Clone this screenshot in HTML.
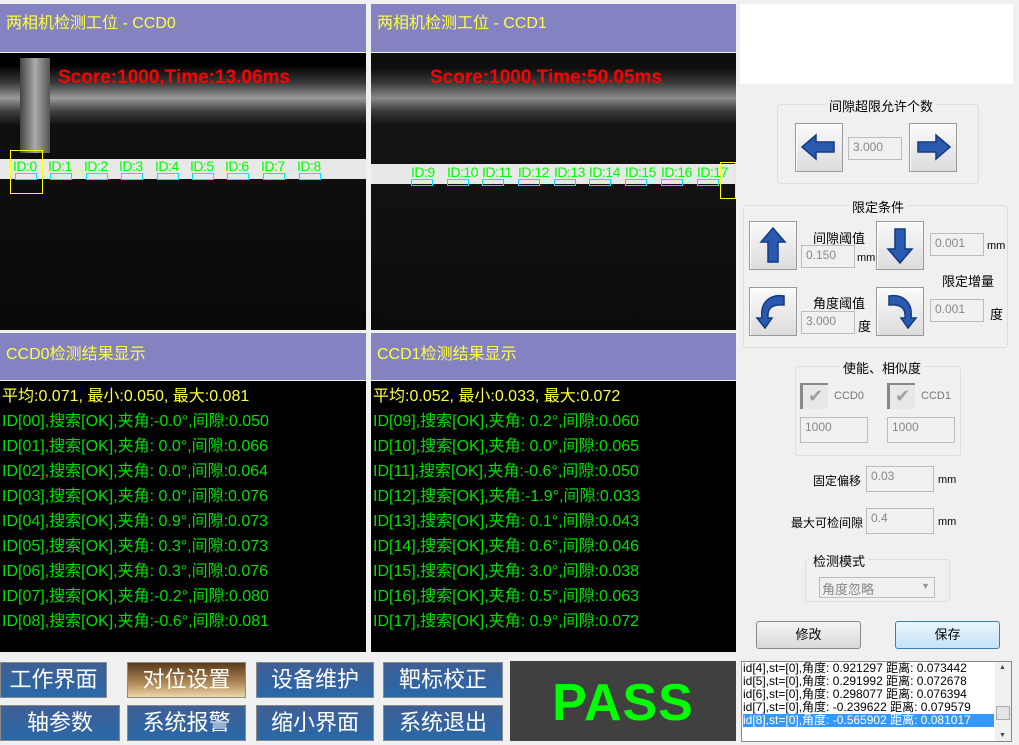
<!DOCTYPE html>
<html><head><meta charset="utf-8"><style>
*{margin:0;padding:0;box-sizing:border-box}
body{width:1019px;height:744px;background:#f0f0f0;position:relative;overflow:hidden;font-family:"Liberation Sans","Noto Sans CJK SC",sans-serif}
.a{position:absolute}
.hd{background:#8482c1;color:#ffff40;font-size:16px;padding:5px 6px}
.img{background:#060606;overflow:hidden}
.res{background:#000;font-size:16px;line-height:25px;padding:3px 2px;color:#00e000;white-space:nowrap}
.btn{background:linear-gradient(#3f5f94,#2a68a8);color:#fff;font-size:22px;text-align:center;line-height:34px;border:1px solid #8a8a8a}
.id{position:absolute;color:#00ff00;font-size:14px;top:-2px;letter-spacing:-0.5px}
.bx{position:absolute;border:1px solid #00e5ff;width:22px;height:7px;top:13px}
.grp{border:1px solid #d5dfe5;border-radius:3px}
.lg{position:absolute;background:#f0f0f0;font-size:13px;color:#000;padding:0 3px}
.ib{background:#f0f0f0;border:1px solid #bcbcbc;color:#888;font-size:12px;padding:2px 4px}
.ab{background:linear-gradient(#fafafa,#dcdcdc);border:1px solid #9a9a9a;box-shadow:inset 1px 1px 0 #fff}
.t{font-size:13px;color:#000}
.mm{font-size:11px;color:#000}
</style></head><body>
<div class="a hd" style="left:0;top:4px;width:366px;height:48px">两相机检测工位 - CCD0</div>
<div class="a img" style="left:0;top:53px;width:366px;height:277px;background:linear-gradient(#000 0,#000 12px,#3a3a3a 30px,#9a9a9a 45px,#404040 58px,#101010 72px,#0a0a0a 100%)">
 <div class="a" style="left:20px;top:5px;width:30px;height:95px;background:linear-gradient(90deg,#444,#aaa,#555)"></div>
 <div class="a" style="left:0;top:106px;width:366px;height:20px;background:#e8e8e8"></div>
 <div class="a" style="left:10px;top:97px;width:33px;height:44px;border:1px solid #ffff00"></div>
 <div class="a" style="left:13px;top:107px;width:340px;height:20px">
  <span class="id" style="left:0">ID:0</span><span class="id" style="left:35px">ID:1</span><span class="id" style="left:71px">ID:2</span><span class="id" style="left:106px">ID:3</span><span class="id" style="left:142px">ID:4</span><span class="id" style="left:177px">ID:5</span><span class="id" style="left:212px">ID:6</span><span class="id" style="left:248px">ID:7</span><span class="id" style="left:284px">ID:8</span>
  <span class="bx" style="left:2px"></span><span class="bx" style="left:37px"></span><span class="bx" style="left:73px"></span><span class="bx" style="left:108px"></span><span class="bx" style="left:144px"></span><span class="bx" style="left:179px"></span><span class="bx" style="left:214px"></span><span class="bx" style="left:250px"></span><span class="bx" style="left:286px"></span>
 </div>
 <div class="a" style="left:58px;top:14px;color:#f00;font-size:19px;font-weight:bold">Score:1000,Time:13.06ms</div>
</div>
<div class="a hd" style="left:0;top:333px;width:366px;height:47px;padding-top:7px">CCD0检测结果显示</div>
<div class="a res" style="left:0;top:381px;width:366px;height:271px">
<div style="color:#ffff40">平均:0.071, 最小:0.050, 最大:0.081</div>
<div>ID[00],搜索[OK],夹角:-0.0°,间隙:0.050</div><div>ID[01],搜索[OK],夹角: 0.0°,间隙:0.066</div><div>ID[02],搜索[OK],夹角: 0.0°,间隙:0.064</div><div>ID[03],搜索[OK],夹角: 0.0°,间隙:0.076</div><div>ID[04],搜索[OK],夹角: 0.9°,间隙:0.073</div><div>ID[05],搜索[OK],夹角: 0.3°,间隙:0.073</div><div>ID[06],搜索[OK],夹角: 0.3°,间隙:0.076</div><div>ID[07],搜索[OK],夹角:-0.2°,间隙:0.080</div><div>ID[08],搜索[OK],夹角:-0.6°,间隙:0.081</div>
</div>
<div class="a hd" style="left:371px;top:4px;width:365px;height:48px">两相机检测工位 - CCD1</div>
<div class="a img" style="left:371px;top:53px;width:365px;height:277px;background:linear-gradient(#0e0e0e 0,#0e0e0e 15px,#3a3a3a 30px,#8a8a8a 45px,#3a3a3a 58px,#141414 72px,#0c0c0c 100%)">
 <div class="a" style="left:0;top:111px;width:365px;height:20px;background:#e8e8e8"></div>
 <div class="a" style="left:349px;top:109px;width:16px;height:37px;border:1px solid #ffff00"></div>
 <div class="a" style="left:40px;top:113px;width:325px;height:20px">
  <span class="id" style="left:0">ID:9</span><span class="id" style="left:36px">ID:10</span><span class="id" style="left:71px">ID:11</span><span class="id" style="left:107px">ID:12</span><span class="id" style="left:143px">ID:13</span><span class="id" style="left:178px">ID:14</span><span class="id" style="left:214px">ID:15</span><span class="id" style="left:250px">ID:16</span><span class="id" style="left:286px">ID:17</span>
  <span class="bx" style="left:0"></span><span class="bx" style="left:36px"></span><span class="bx" style="left:71px"></span><span class="bx" style="left:107px"></span><span class="bx" style="left:143px"></span><span class="bx" style="left:178px"></span><span class="bx" style="left:214px"></span><span class="bx" style="left:250px"></span><span class="bx" style="left:286px"></span>
 </div>
 <div class="a" style="left:59px;top:14px;color:#f00;font-size:19px;font-weight:bold">Score:1000,Time:50.05ms</div>
</div>
<div class="a hd" style="left:371px;top:333px;width:365px;height:47px;padding-top:7px">CCD1检测结果显示</div>
<div class="a res" style="left:371px;top:381px;width:365px;height:271px">
<div style="color:#ffff40">平均:0.052, 最小:0.033, 最大:0.072</div>
<div>ID[09],搜索[OK],夹角: 0.2°,间隙:0.060</div><div>ID[10],搜索[OK],夹角: 0.0°,间隙:0.065</div><div>ID[11],搜索[OK],夹角:-0.6°,间隙:0.050</div><div>ID[12],搜索[OK],夹角:-1.9°,间隙:0.033</div><div>ID[13],搜索[OK],夹角: 0.1°,间隙:0.043</div><div>ID[14],搜索[OK],夹角: 0.6°,间隙:0.046</div><div>ID[15],搜索[OK],夹角: 3.0°,间隙:0.038</div><div>ID[16],搜索[OK],夹角: 0.5°,间隙:0.063</div><div>ID[17],搜索[OK],夹角: 0.9°,间隙:0.072</div>
</div>
<div class="a btn" style="left:0;top:662px;width:107px;height:36px">工作界面</div>
<div class="a btn" style="left:127px;top:662px;width:119px;height:36px;background:linear-gradient(#5a3a1a,#b08a5a 60%,#f0d8a8)">对位设置</div>
<div class="a btn" style="left:256px;top:662px;width:118px;height:36px">设备维护</div>
<div class="a btn" style="left:383px;top:662px;width:120px;height:36px">靶标校正</div>
<div class="a btn" style="left:0;top:705px;width:120px;height:36px">轴参数</div>
<div class="a btn" style="left:127px;top:705px;width:119px;height:36px">系统报警</div>
<div class="a btn" style="left:256px;top:705px;width:118px;height:36px">缩小界面</div>
<div class="a btn" style="left:383px;top:705px;width:120px;height:36px">系统退出</div>
<div class="a" style="left:510px;top:661px;width:226px;height:80px;background:#404040;color:#00ff00;font-size:52px;font-weight:bold;text-align:center;line-height:84px;letter-spacing:1px">PASS</div>
<div class="a" style="left:740px;top:4px;width:273px;height:80px;background:#fff"></div>
<div class="a grp" style="left:777px;top:104px;width:202px;height:80px"></div>
<div class="lg" style="left:826px;top:96px">间隙超限允许个数</div>
<div class="a ab" style="left:795px;top:123px;width:48px;height:49px"><svg width="46" height="47"><path d="M6 23 L20 11 V18 H38 V28 H20 V35 Z" fill="#2a5ab0" stroke="#123a80" stroke-width="1.5"/></svg></div>
<div class="a ib" style="left:848px;top:137px;width:54px;height:23px">3.000</div>
<div class="a ab" style="left:909px;top:123px;width:48px;height:49px"><svg width="46" height="47"><path d="M40 23 L26 11 V18 H8 V28 H26 V35 Z" fill="#2a5ab0" stroke="#123a80" stroke-width="1.5"/></svg></div>
<div class="a grp" style="left:743px;top:205px;width:265px;height:143px"></div>
<div class="lg" style="left:849px;top:197px">限定条件</div>
<div class="a ab" style="left:749px;top:221px;width:48px;height:49px"><svg width="46" height="47"><path d="M23 6 L11 20 H18 V40 H28 V20 H35 Z" fill="#2a5ab0" stroke="#123a80" stroke-width="1.5"/></svg></div>
<div class="a t" style="left:813px;top:228px">间隙阈值</div>
<div class="a ib" style="left:801px;top:245px;width:54px;height:23px">0.150</div>
<div class="a mm" style="left:857px;top:252px">mm</div>
<div class="a ab" style="left:876px;top:221px;width:48px;height:49px"><svg width="46" height="47"><path d="M23 41 L11 27 H18 V7 H28 V27 H35 Z" fill="#2a5ab0" stroke="#123a80" stroke-width="1.5"/></svg></div>
<div class="a ib" style="left:930px;top:233px;width:54px;height:23px">0.001</div>
<div class="a mm" style="left:987px;top:240px">mm</div>
<div class="a t" style="left:942px;top:271px">限定增量</div>
<div class="a ab" style="left:749px;top:287px;width:48px;height:49px"><svg width="46" height="47"><path d="M34 8 C20 6 10 14 12 30 L7 30 L15 40 L22 30 L18 30 C17 20 22 16 34 17 Z" fill="#2a5ab0" stroke="#123a80" stroke-width="1.5"/></svg></div>
<div class="a t" style="left:813px;top:293px">角度阈值</div>
<div class="a ib" style="left:801px;top:311px;width:54px;height:23px">3.000</div>
<div class="a t" style="left:858px;top:316px">度</div>
<div class="a ab" style="left:876px;top:287px;width:48px;height:49px"><svg width="46" height="47"><path d="M12 8 C26 6 36 14 34 30 L39 30 L31 40 L24 30 L28 30 C29 20 24 16 12 17 Z" fill="#2a5ab0" stroke="#123a80" stroke-width="1.5"/></svg></div>
<div class="a ib" style="left:930px;top:299px;width:54px;height:23px">0.001</div>
<div class="a t" style="left:990px;top:304px">度</div>
<div class="a grp" style="left:795px;top:366px;width:166px;height:90px"></div>
<div class="lg" style="left:840px;top:358px">使能、相似度</div>
<div class="a" style="left:800px;top:383px;width:28px;height:26px;border-left:3px solid #888;border-top:2px solid #888;background:#e8e8e8;color:#a0a0a0;font-size:18px;line-height:22px;text-align:center">✔</div>
<div class="a" style="left:834px;top:390px;font-size:11px;color:#777">CCD0</div>
<div class="a" style="left:887px;top:383px;width:28px;height:26px;border-left:3px solid #888;border-top:2px solid #888;background:#e8e8e8;color:#a0a0a0;font-size:18px;line-height:22px;text-align:center">✔</div>
<div class="a" style="left:921px;top:390px;font-size:11px;color:#777">CCD1</div>
<div class="a ib" style="left:800px;top:417px;width:68px;height:26px">1000</div>
<div class="a ib" style="left:887px;top:417px;width:68px;height:26px">1000</div>
<div class="a" style="left:813px;top:472px;font-size:12px">固定偏移</div>
<div class="a ib" style="left:866px;top:466px;width:68px;height:26px">0.03</div>
<div class="a mm" style="left:938px;top:474px">mm</div>
<div class="a" style="left:791px;top:514px;font-size:12px">最大可检间隙</div>
<div class="a ib" style="left:866px;top:508px;width:68px;height:26px">0.4</div>
<div class="a mm" style="left:938px;top:516px">mm</div>
<div class="a grp" style="left:805px;top:559px;width:145px;height:43px"></div>
<div class="lg" style="left:810px;top:551px">检测模式</div>
<div class="a" style="left:819px;top:577px;width:116px;height:21px;border:1px solid #bcbcbc;background:#f0f0f0;font-size:13px;color:#888;padding:1px 2px">角度忽略<span style="position:absolute;right:4px;top:3px;font-size:9px;color:#999">▼</span></div>
<div class="a" style="left:756px;top:621px;width:105px;height:28px;border:1px solid #8a8a8a;border-radius:3px;background:linear-gradient(#f4f4f4,#dadada);text-align:center;line-height:26px;font-size:13px">修改</div>
<div class="a" style="left:895px;top:621px;width:105px;height:28px;border:1px solid #3c7fb1;border-radius:3px;background:linear-gradient(#eaf6fd,#c4e3f6);text-align:center;line-height:26px;font-size:13px">保存</div>
<div class="a" style="left:741px;top:661px;width:271px;height:81px;background:#fff;border:1px solid #828790"></div>
<div class="a" style="left:743px;top:662px;width:251px;font-size:12px;line-height:13px;color:#000;white-space:nowrap">
<div>id[4],st=[0],角度: 0.921297 距离: 0.073442</div>
<div>id[5],st=[0],角度: 0.291992 距离: 0.072678</div>
<div>id[6],st=[0],角度: 0.298077 距离: 0.076394</div>
<div>id[7],st=[0],角度: -0.239622 距离: 0.079579</div>
<div style="background:#3399ff;color:#fff">id[8],st=[0],角度: -0.565902 距离: 0.081017</div>
</div>
<div class="a" style="left:995px;top:662px;width:16px;height:79px;background:#f0f0f0"><div style="position:absolute;top:44px;left:1px;width:14px;height:14px;background:#e4e4e4;border:1px solid #aaa"></div><div style="position:absolute;top:2px;left:4px;font-size:7px;color:#444">▲</div><div style="position:absolute;bottom:2px;left:4px;font-size:7px;color:#444">▼</div></div>
</body></html>
